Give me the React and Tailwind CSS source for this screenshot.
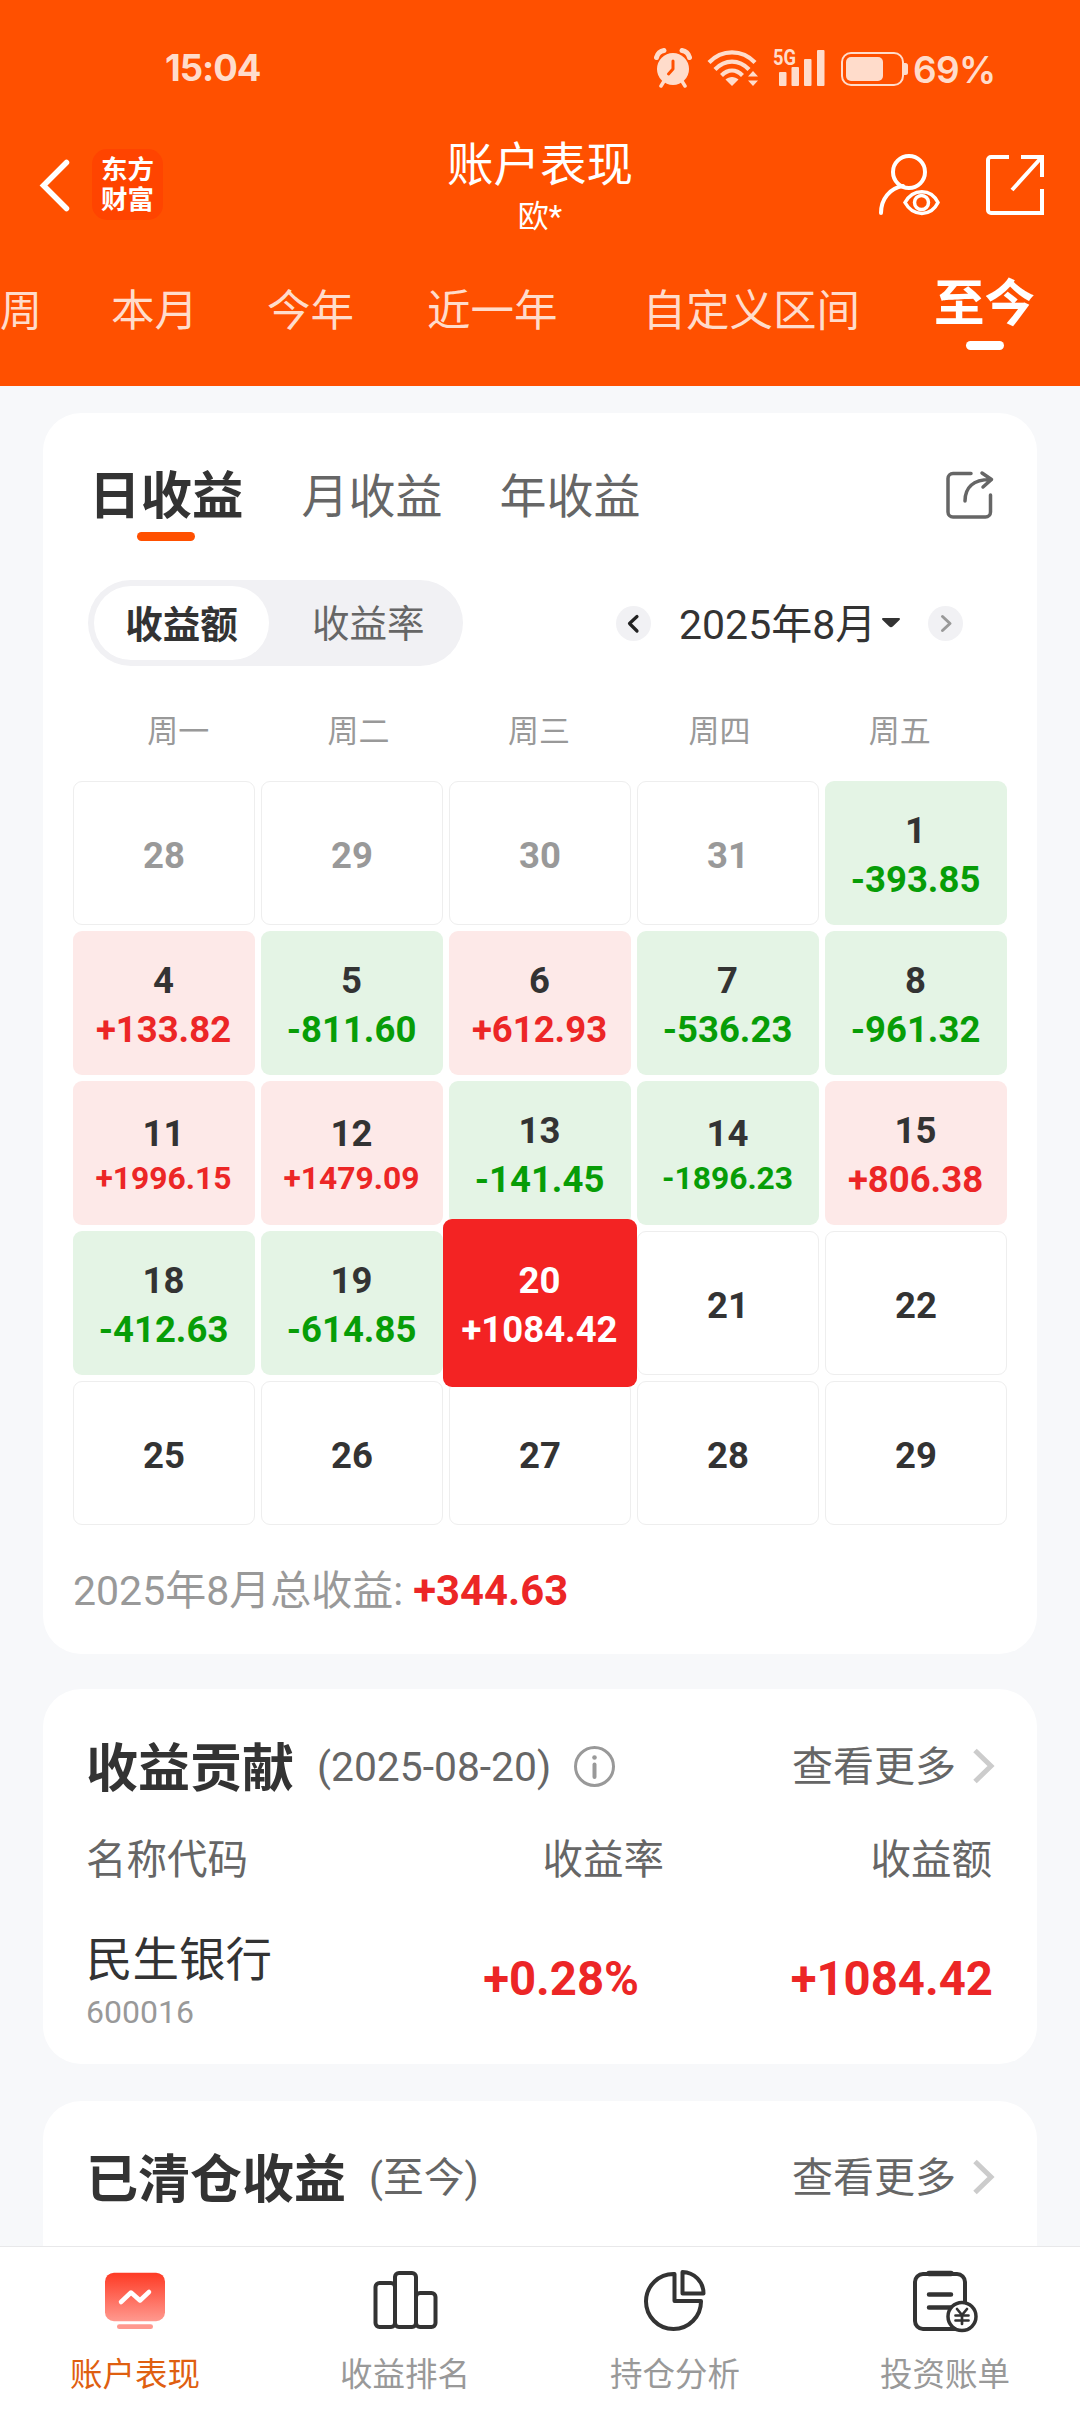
function StatusBar() {
  return (
    <div className="flex h-[136px] items-center pl-[165px] pr-[87px] text-[#ffdccb] font-['Inter',sans-serif] font-semibold">
      <span className="pt-px text-[36.500px] font-bold leading-none tracking-[-1px]">15:04</span>
      <div className="ml-auto flex items-center">
        <svg width="38" height="40" viewBox="0 0 38 40" fill="none">
          <circle cx="19" cy="21" r="16" fill="currentColor" />
          <path d="M2.500 9.500C3.500 6 6 3 10 2.500M35.500 9.500C34.500 6 32 3 28 2.500" stroke="currentColor" strokeWidth="5" strokeLinecap="round" />
          <path d="M9.500 34l-2.500 4M28.500 34l2.500 4" stroke="currentColor" strokeWidth="3.500" strokeLinecap="round" />
          <path d="M19 13v8l-4.500 5" stroke="#ff5000" strokeWidth="3" strokeLinecap="round" strokeLinejoin="round" />
        </svg>
        <svg className="ml-[15px]" width="52" height="38" viewBox="0 0 52 38" fill="none">
          <path d="M2 13.500C15 0 35 0 48 13.500M8 20.500C18 10 32 10 42 20.500M14.500 26.500C21 20 29 20 35.500 26.500" stroke="currentColor" strokeWidth="4.200" />
          <path d="M25 37l-6.500-6.500c3.500-3.500 9.500-3.500 13 0z" fill="currentColor" />
          <path d="M46 22l5 5.500H41zM46 37l5-5.500H41z" fill="currentColor" />
        </svg>
        <svg className="ml-[14px]" width="54" height="50" viewBox="0 -5 54 50" fill="currentColor">
          <text x="0" y="17" fontSize="22" fontWeight="700" fontFamily="Roboto" textLength="23" lengthAdjust="spacingAndGlyphs">5G</text>
          <rect x="6" y="24" width="7.500" height="14" rx="1" />
          <rect x="18.500" y="19" width="7.500" height="19" rx="1" />
          <rect x="31" y="11" width="7.500" height="27" rx="1" />
          <rect x="44" y="2" width="7.500" height="36" rx="1" />
        </svg>
        <svg className="ml-[13px] mt-[2px]" width="70" height="38" viewBox="0 0 70 38" fill="none">
          <rect x="2" y="3" width="61" height="32" rx="9" stroke="currentColor" strokeWidth="2" />
          <rect x="6" y="7" width="37" height="24" rx="5" fill="currentColor" />
          <path d="M64 13h1.500a2.500 2.500 0 0 1 2.500 2.500v7a2.500 2.500 0 0 1-2.500 2.500H64z" fill="currentColor" />
        </svg>
        <span className="ml-[3px] w-[80px] whitespace-nowrap pt-[2px] text-[37px] font-semibold leading-none tracking-[-0.7px]">69%</span>
      </div>
    </div>
  );
}

function TitleBar() {
  return (
    <div className="grid h-[100px] grid-cols-[1fr_auto_1fr] grid-rows-[100px] items-center text-white">
      <div className="flex items-center pl-[38px]">
        <svg width="34" height="56" viewBox="0 0 34 56" fill="none" stroke="currentColor" strokeWidth="5.500" strokeLinecap="round" strokeLinejoin="miter">
          <path d="M28.500 4.500L5.500 27.500L28.500 50.500" />
        </svg>
        <div className="-mt-[3px] ml-[20px] flex h-[71px] w-[71px] flex-col items-center justify-center rounded-[15px] bg-[#ff4400] text-[26.500px] font-bold leading-[30px]">
          <span>东方</span>
          <span>财富</span>
        </div>
      </div>
      <div className="flex flex-col items-center self-start pt-[2px]">
        <h1 className="text-[46.500px] leading-[54px]">账户表现</h1>
        <span className="text-[31px] leading-[50px]">欧*</span>
      </div>
      <div className="flex items-center justify-end pr-[34px]">
        <svg className="-mt-[4px]" width="64" height="64" viewBox="0 0 64 64" fill="none" stroke="currentColor" strokeWidth="4">
          <circle cx="32" cy="20" r="16" />
          <path d="M4 61c0-14 9-25 22-27" strokeLinecap="round" />
          <path d="M28 50.500C36 36 54 36 61 50.500C54 65 36 65 28 50.500z" strokeWidth="3.500" />
          <circle cx="44.500" cy="50.500" r="7" strokeWidth="3.500" />
        </svg>
        <svg className="-mt-[4px] ml-[43px]" width="62" height="62" viewBox="0 0 62 62" fill="none" stroke="currentColor" strokeWidth="4">
          <path d="M25 4H7a3 3 0 0 0-3 3v50a3 3 0 0 0 3 3H58V36M37 4H58V24M57 5L28 37" />
        </svg>
      </div>
    </div>
  );
}

function RangeTabs() {
  return (
    <nav className="flex h-[150px] items-center whitespace-nowrap pt-[2px] text-[43.500px] leading-none text-[#ffdccb]">
      <span className="w-[41px] text-[42px]">周</span>
      <span className="ml-[70px]">本月</span>
      <span className="ml-[69px]">今年</span>
      <span className="ml-[73px]">近一年</span>
      <span className="ml-[85px]">自定义区间</span>
      <span className="relative ml-[74px] -mt-[16px] text-[50.500px] font-bold text-white">
        至今
        <i className="absolute left-[32px] top-[62px] h-[9px] w-[38px] rounded-full bg-white" />
      </span>
    </nav>
  );
}

const WEEK = ["周一", "周二", "周三", "周四", "周五"];
const DAYS = [
  ["28", null, "out"], ["29", null, "out"], ["30", null, "out"], ["31", null, "out"], ["1", "-393.85"],
  ["4", "+133.82"], ["5", "-811.60"], ["6", "+612.93"], ["7", "-536.23"], ["8", "-961.32"],
  ["11", "+1996.15"], ["12", "+1479.09"], ["13", "-141.45"], ["14", "-1896.23"], ["15", "+806.38"],
  ["18", "-412.63"], ["19", "-614.85"], ["20", "+1084.42", "active"], ["21"], ["22"],
  ["25"], ["26"], ["27"], ["28"], ["29"],
];

function Day({ day, value, state }) {
  if (!value) {
    return (
      <div className={`flex items-center justify-center rounded-[9px] border border-[#eeeeee] pt-[6px] text-[36.500px] font-bold leading-none ${state === "out" ? "text-[#999999]" : "text-[#333333]"}`}>
        {day}
      </div>
    );
  }
  const up = value[0] === "+";
  const small = value.length > 7 && state !== "active";
  const tone = state === "active"
    ? "z-10 -mx-[6px] -my-[12px] bg-[#f32323] text-white"
    : up ? "bg-[#fde9e8] text-[#ec2626]" : "bg-[#e4f4e5] text-[#079d07]";
  return (
    <div className={`flex flex-col items-center justify-center rounded-[9px] pt-[3px] pr-px font-bold ${tone}`}>
      <span className={`text-[36.500px] ${small ? "pt-[2px] leading-[46px]" : "leading-[49px]"} ${state === "active" ? "" : "text-[#333333]"}`}>{day}</span>
      <span className={small ? "text-[31.800px] leading-[43px]" : "text-[36.500px] leading-[49px]"}>{value}</span>
    </div>
  );
}

function Calendar() {
  return (
    <section className="h-[1241px] rounded-[38px] bg-white">
      <div className="flex h-[167px] items-center pl-[46px] pr-[41px] text-[47px] leading-none text-[#666666]">
        <span className="relative text-[51.500px] font-bold text-[#333333]">
          日收益
          <i className="absolute left-[48px] top-[61px] h-[9px] w-[58px] rounded-full bg-[#ff5000]" />
        </span>
        <span className="ml-[58px]">月收益</span>
        <span className="ml-[57px]">年收益</span>
        <svg className="-mt-[4px] ml-auto" width="52" height="52" viewBox="0 0 52 52" fill="none" stroke="currentColor" strokeWidth="3.500" strokeLinecap="round" strokeLinejoin="round">
          <path d="M27 4.500H9a5 5 0 0 0-5 5V43a5 5 0 0 0 5 5H41.500a5 5 0 0 0 5-5V26" />
          <path d="M21 32C21 19 29 10.500 46 10.500M38 4L47.500 10.500L39 18" />
        </svg>
      </div>
      <div className="ml-[45px] flex h-[86px] items-center">
        <div className="flex h-[86px] w-[375px] items-center rounded-full bg-[#f1f1f4] p-[6px] text-[37.500px] leading-none text-[#666666]">
          <span className="flex h-[74px] w-[175px] items-center justify-center rounded-full bg-white pt-[5px] font-bold text-[#333333]">收益额</span>
          <span className="ml-[43px] pt-[4px]">收益率</span>
        </div>
        <svg className="ml-[153px]" width="35" height="35" viewBox="0 0 35 35" fill="none">
          <circle cx="17.500" cy="17.500" r="17.500" fill="#f1f1f4" />
          <path d="M21 10.500L13.500 17.500L21 25" stroke="#222222" strokeWidth="3.200" strokeLinecap="round" strokeLinejoin="round" />
        </svg>
        <span className="ml-[28px] w-[190px] whitespace-nowrap pt-[5px] text-[41px] leading-none text-[#333333]">2025年8月</span>
        <svg className="ml-[12px]" width="20" height="12" viewBox="0 0 20 12" fill="#333333">
          <path d="M2 1H18a1 1 0 0 1 .7 1.700L12 9.300a3 3 0 0 1-4 0L1.300 2.700A1 1 0 0 1 2 1z" />
        </svg>
        <svg className="ml-[27px]" width="35" height="35" viewBox="0 0 35 35" fill="none">
          <circle cx="17.500" cy="17.500" r="17.500" fill="#f1f1f4" />
          <path d="M14.500 10.500L22 17.500L14.500 24.500" stroke="#999999" strokeWidth="3" strokeLinecap="round" strokeLinejoin="round" />
        </svg>
      </div>
      <div className="ml-[45px] mt-[45px] grid h-[40px] w-[902px] grid-cols-5 items-center text-center text-[31px] leading-none text-[#999999]">
        {WEEK.map((d) => <span key={d}>{d}</span>)}
      </div>
      <div className="ml-[30px] mt-[30px] grid grid-cols-[repeat(5,182px)] grid-rows-[repeat(5,144px)] gap-[6px]">
        {DAYS.map(([day, value, state], i) => <Day key={i} day={day} value={value} state={state} />)}
      </div>
      <p className="ml-[30px] mt-[40px] text-[41px] leading-[52px] text-[#999999]">
        2025年8月总收益: <b className="text-[41.800px] text-[#ec2626]">+344.63</b>
      </p>
    </section>
  );
}

function SectionHead({ title, note, info }) {
  return (
    <div className="flex h-[52px] items-center pl-[43px] pr-[40px] leading-none text-[#666666]">
      <h2 className="pt-[5px] text-[52px] font-bold text-[#333333]">{title}</h2>
      <span className="ml-[23px] text-[40.800px]">{note}</span>
      {info && (
        <svg className="-mt-[2px] ml-[22px]" width="43" height="43" viewBox="0 0 43 43" fill="none" stroke="#999999">
          <circle cx="21.500" cy="21.500" r="19" strokeWidth="3" />
          <circle cx="21.500" cy="12.500" r="2.300" fill="#999999" stroke="none" />
          <path d="M21.500 19.500V32" strokeWidth="4" strokeLinecap="round" />
        </svg>
      )}
      <span className="ml-auto text-[41px]">查看更多</span>
      <svg className="-mt-[2px] ml-[15px]" width="26" height="38" viewBox="0 0 26 38" fill="none" stroke="#cccccc" strokeWidth="5">
        <path d="M4 3.500L20 19L4 34.500" />
      </svg>
    </div>
  );
}

function Contribution() {
  return (
    <section className="mt-[35px] h-[375px] rounded-[38px] bg-white pt-[52px]">
      <SectionHead title="收益贡献" note="(2025-08-20)" info />
      <div className="mt-[42px] grid h-[50px] grid-cols-[280px_298px_328px] items-center pl-[43px] text-[40.500px] leading-none text-[#666666]">
        <span>名称代码</span>
        <span className="text-right">收益率</span>
        <span className="text-right">收益额</span>
      </div>
      <div className="mt-[47px] grid grid-cols-[280px_273px_354px] items-start pl-[43px]">
        <div className="flex flex-col">
          <span className="text-[46.500px] leading-[56px] text-[#333333]">民生银行</span>
          <span className="text-[32px] leading-[48px] text-[#999999]">600016</span>
        </div>
        <b className="pt-[24px] text-right text-[47.300px] leading-none text-[#ec2626]">+0.28%</b>
        <b className="pt-[24px] text-right text-[47.300px] leading-none text-[#ec2626]">+1084.42</b>
      </div>
    </section>
  );
}

function TabItem({ label, active, children }) {
  return (
    <div className="flex flex-1 flex-col items-center pt-[20px]">
      <svg width="70" height="70" viewBox="0 0 70 70" fill="none" stroke="#333333" strokeWidth="4" strokeLinejoin="round">{children}</svg>
      <span className={`mt-[18px] text-[32.500px] leading-[40px] ${active ? "text-[#df5f10]" : "text-[#999999]"}`}>{label}</span>
    </div>
  );
}

function BottomNav() {
  return (
    <nav className="flex h-[166px] border-t border-[#e8e8ea] bg-white">
      <TabItem label="账户表现" active>
        <defs>
          <linearGradient id="screen" x1="0" y1="0" x2="0" y2="1">
            <stop offset="0" stopColor="#fe3a24" />
            <stop offset="1" stopColor="#ff998f" />
          </linearGradient>
        </defs>
        <rect x="5" y="5.700" width="60" height="48.500" rx="9" fill="url(#screen)" stroke="none" />
        <rect x="17" y="57.300" width="36" height="4.700" rx="2.300" fill="#ff998f" stroke="none" />
        <path d="M21 35L31 25.500L40 33.500L49 25" stroke="#ffffff" strokeWidth="4.500" strokeLinecap="round" />
      </TabItem>
      <TabItem label="收益排名">
        <rect x="5.500" y="16" width="19.500" height="44" rx="4" />
        <rect x="25" y="6" width="21" height="54" rx="4" />
        <rect x="46" y="26" width="19.500" height="34" rx="4" />
      </TabItem>
      <TabItem label="持仓分析">
        <path d="M34.500 7A27.500 27.500 0 1 0 61 34H34.500z" />
        <path d="M42.500 5V26.500H63.500A21.500 21.500 0 0 0 42.500 5z" />
      </TabItem>
      <TabItem label="投资账单">
        <path d="M19 6.500H41" strokeWidth="5.500" strokeLinecap="round" />
        <path d="M55 36V15a8 8 0 0 0-8-8H13a8 8 0 0 0-8 8V54a8 8 0 0 0 8 8H50" />
        <path d="M19 27.500H41M19 40.500H43" strokeWidth="4.500" strokeLinecap="round" />
        <circle cx="52" cy="49.500" r="14" fill="#ffffff" strokeWidth="3.500" />
        <path d="M47 42L52 48L57 42M52 48V57M45.500 48.500H58.500M45.500 53.500H58.500" strokeWidth="2.700" strokeLinecap="round" />
      </TabItem>
    </nav>
  );
}

export default function App() {
  return (
    <div className="flex h-[2412px] w-[1080px] flex-col overflow-hidden bg-[#f7f8fa] font-[Roboto,'Noto_Sans_CJK_SC',sans-serif]">
      <header className="h-[386px] shrink-0 bg-[#ff5000]">
        <StatusBar />
        <TitleBar />
        <RangeTabs />
      </header>
      <main className="h-[1860px] shrink-0 overflow-hidden px-[43px] pt-[27px]">
        <Calendar />
        <Contribution />
        <section className="mt-[37px] h-[300px] rounded-[38px] bg-white pt-[51px]">
          <SectionHead title="已清仓收益" note="(至今)" />
        </section>
      </main>
      <BottomNav />
    </div>
  );
}
